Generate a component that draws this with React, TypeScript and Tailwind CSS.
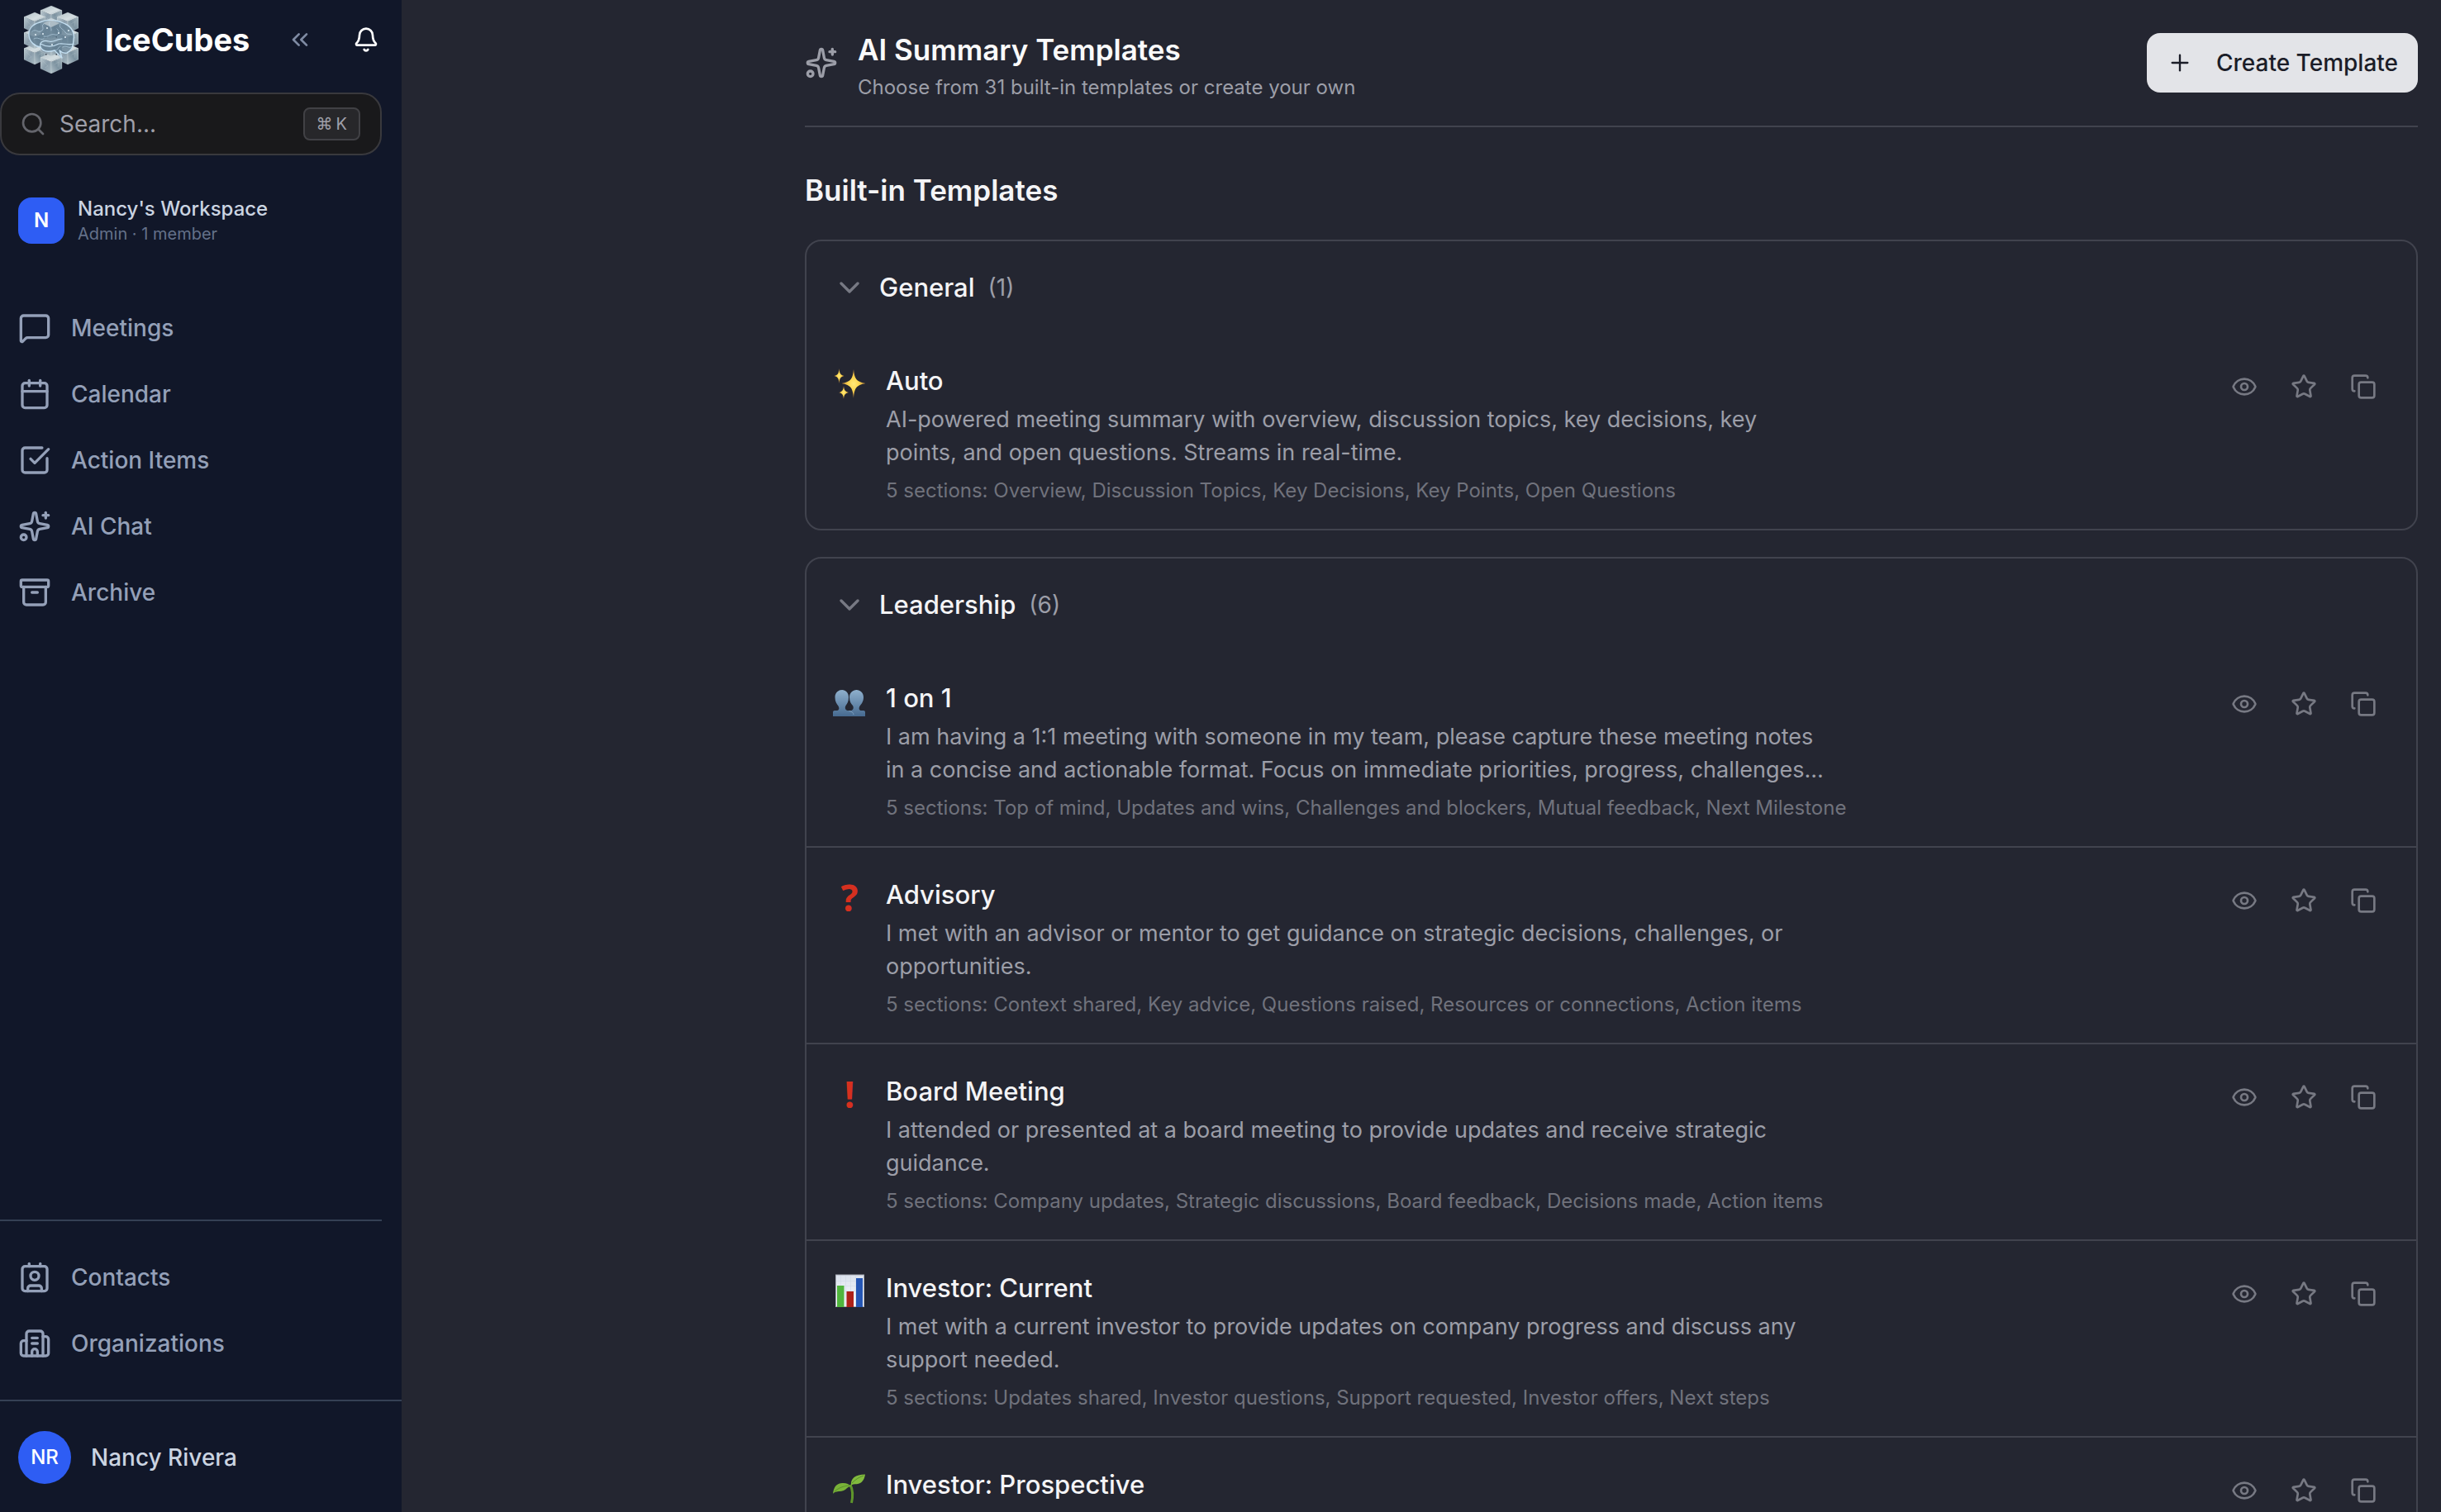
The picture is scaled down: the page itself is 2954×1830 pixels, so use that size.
import type { ReactNode } from "react";
import {
  Archive,
  Bell,
  Building2,
  Calendar,
  ChevronDown,
  ChevronsLeft,
  Contact,
  Copy,
  Eye,
  MessageSquare,
  Plus,
  Search,
  Sparkles,
  SquareCheckBig,
  Star,
  type LucideIcon,
} from "lucide-react";

type NavItem = { name: string; icon: LucideIcon };

type Template = {
  name: string;
  icon: ReactNode;
  description: string;
  sections: string;
};

type Group = { name: string; count: number; templates: Template[] };

const mainNav: NavItem[] = [
  { name: "Meetings", icon: MessageSquare },
  { name: "Calendar", icon: Calendar },
  { name: "Action Items", icon: SquareCheckBig },
  { name: "AI Chat", icon: Sparkles },
  { name: "Archive", icon: Archive },
];

const secondaryNav: NavItem[] = [
  { name: "Contacts", icon: Contact },
  { name: "Organizations", icon: Building2 },
];

function SparklesEmoji() {
  return (
    <svg viewBox="0 0 40 40" className="size-10" aria-hidden="true">
      <defs>
        <radialGradient id="spark">
          <stop offset="0" stopColor="#ffe97a" />
          <stop offset="0.45" stopColor="#fbd54f" />
          <stop offset="1" stopColor="#c98a3a" />
        </radialGradient>
      </defs>
      <g fill="url(#spark)">
        <path d="M25 3C26 14 28 18 39.500 20C28 22 26 26 25 38C24 26 22 22 10.500 20C22 18 24 14 25 3Z" />
        <path d="M7.500 2C8 8 9 10 13.500 11C9 12 8 14 7.500 20C7 14 6 12 1.500 11C6 10 7 8 7.500 2Z" />
        <path d="M13 23C13.500 28 14.500 30 19 31C14.500 32 13.500 34 13 39C12.500 34 11.500 32 7 31C11.500 30 12.500 28 13 23Z" />
      </g>
    </svg>
  );
}

function PeopleEmoji() {
  return (
    <svg viewBox="0 -4 40 40" className="size-10" aria-hidden="true">
      <defs>
        <linearGradient id="bust" x1="0" y1="0" x2="0" y2="1">
          <stop offset="0" stopColor="#8fb0cd" />
          <stop offset="1" stopColor="#466a90" />
        </linearGradient>
      </defs>
      <path
        fill="url(#bust)"
        d="M11 3C15.500 3 19 6.500 19 12C19 17 17 20 15.500 22C14 24.500 15 27.500 17.500 28H22C24.500 27.500 25.500 24.500 24 22C22 20 20 17 20 12C20 6.500 24 3 28.500 3C33 3 37 6.500 37 12C37 17 34.500 20 32.500 22.500C31 25 31.500 27.500 33.500 28H37C38.500 28 39 29 39 30V35H0V30C0 29 .5 28 2 28H5C7.500 27.500 8 25 6.500 22.500C4.500 20 2.500 17 2.500 12C2.500 6.500 6.500 3 11 3Z"
      />
      <path d="M19.500 28.500C23 29 25 31 25 33" fill="none" stroke="#7d9fc0" />
    </svg>
  );
}

function ChartEmoji() {
  return (
    <svg viewBox="0 0 40 40" className="size-10" aria-hidden="true">
      <defs>
        <linearGradient id="sheet" x1="0" y1="0" x2="0" y2="1">
          <stop offset="0" stopColor="#dce3ee" />
          <stop offset="1" stopColor="#f6f7fa" />
        </linearGradient>
      </defs>
      <rect x="3.500" y="1" width="34" height="38.500" fill="url(#sheet)" stroke="#a9adb8" />
      <path d="M9.500 2v37M15.500 2v37M21.500 2v37M27.500 2v37M4 8.500h33M4 14.500h33M4 20.500h33" stroke="#cdd6e4" strokeWidth=".5" />
      <rect x="5" y="14" width="8.500" height="26" fill="#50b53d" />
      <rect x="16.500" y="21" width="8.500" height="19" fill="#ad2118" />
      <rect x="28" y="5" width="8" height="35" fill="#2556b4" />
    </svg>
  );
}

function SeedlingEmoji() {
  return (
    <svg viewBox="0 0 40 40" className="size-10" aria-hidden="true">
      <path d="M21 17C24 23 24.500 30 22.500 39" fill="none" stroke="#5f962b" strokeWidth="3" />
      <path d="M0 28C1 19 5 15.500 11 15C16 14.500 19 16 22 19C18 19 17 22 13 24C8 26 3 24 0 28Z" fill="#79b238" />
      <path d="M22 18C21 9 27 5 39 4.500C38 11 35 15 30 16C26 16.500 24 16 22 18Z" fill="#82bb3e" />
      <path d="M2 25C7 21 12 18.500 20 18M23 15C27 11 31 8 37 6" fill="none" stroke="#4f8526" strokeWidth=".8" />
    </svg>
  );
}

function RedMark({ children }: { children: ReactNode }) {
  return (
    <span className="w-10 text-center font-['Open_Sans',sans-serif] text-[44px] leading-10 font-bold text-[#d6301f]">
      {children}
    </span>
  );
}

const groups: Group[] = [
  {
    name: "General",
    count: 1,
    templates: [
      {
        name: "Auto",
        icon: <SparklesEmoji />,
        description:
          "AI-powered meeting summary with overview, discussion topics, key decisions, key points, and open questions. Streams in real-time.",
        sections: "Overview, Discussion Topics, Key Decisions, Key Points, Open Questions",
      },
    ],
  },
  {
    name: "Leadership",
    count: 6,
    templates: [
      {
        name: "1 on 1",
        icon: <PeopleEmoji />,
        description:
          "I am having a 1:1 meeting with someone in my team, please capture these meeting notes in a concise and actionable format. Focus on immediate priorities, progress, challenges...",
        sections: "Top of mind, Updates and wins, Challenges and blockers, Mutual feedback, Next Milestone",
      },
      {
        name: "Advisory",
        icon: <RedMark>?</RedMark>,
        description:
          "I met with an advisor or mentor to get guidance on strategic decisions, challenges, or opportunities.",
        sections: "Context shared, Key advice, Questions raised, Resources or connections, Action items",
      },
      {
        name: "Board Meeting",
        icon: <RedMark>!</RedMark>,
        description:
          "I attended or presented at a board meeting to provide updates and receive strategic guidance.",
        sections: "Company updates, Strategic discussions, Board feedback, Decisions made, Action items",
      },
      {
        name: "Investor: Current",
        icon: <ChartEmoji />,
        description:
          "I met with a current investor to provide updates on company progress and discuss any support needed.",
        sections: "Updates shared, Investor questions, Support requested, Investor offers, Next steps",
      },
      {
        name: "Investor: Prospective",
        icon: <SeedlingEmoji />,
        description: "",
        sections: "",
      },
    ],
  },
];

// back to front, so nearer cubes cover the ones behind
const cubes = [
  [33, 0],
  [13, 46],
  [53, 46],
  [13, 27],
  [53, 27],
  [13, 8],
  [53, 8],
  [33, 57],
  [33, 36],
  [33, 15],
];

function Logo() {
  return (
    <svg viewBox="0 0 66 82" className="h-[82px] w-[66px]" role="img" aria-label="IceCubes logo">
      <defs>
        <linearGradient id="iceTop" x1="0" y1="0" x2="1" y2="1">
          <stop offset="0" stopColor="#b3c1c8" />
          <stop offset="0.6" stopColor="#d5dee1" />
          <stop offset="1" stopColor="#a5b6bf" />
        </linearGradient>
        <linearGradient id="iceLeft" x1="0" y1="0" x2="1" y2="1">
          <stop offset="0" stopColor="#bccad0" />
          <stop offset="0.5" stopColor="#8a9dab" />
          <stop offset="1" stopColor="#a9bac2" />
        </linearGradient>
        <linearGradient id="iceRight" x1="1" y1="0" x2="0" y2="1">
          <stop offset="0" stopColor="#a5b5bd" />
          <stop offset="0.5" stopColor="#7c92a0" />
          <stop offset="1" stopColor="#b3c2c9" />
        </linearGradient>
      </defs>
      {cubes.map(([x, y]) => (
        <g
          key={`${x}-${y}`}
          transform={`translate(${x} ${y})`}
          stroke="#dfe8ea"
          strokeOpacity=".45"
          strokeWidth=".5"
          strokeLinejoin="round"
        >
          <path d="M0 0L13 5.500L0 11L-13 5.500Z" fill="url(#iceTop)" />
          <path d="M-13 5.500L0 11V25L-13 19Z" fill="url(#iceLeft)" />
          <path d="M13 5.500L0 11V25L13 19Z" fill="url(#iceRight)" />
          <path d="M-10 10L-4 16L-8 18M4 14L9 11L8 17" fill="none" strokeOpacity=".3" />
        </g>
      ))}
      <path
        d="M6 36C5 27 12 22 19 20C29 15 43 18 50 22C57 25 62 33 60 41C60 47 58 54 52 57C48 58 45 56 43 54L46 63L41 58L37 54C30 56 23 56 20 50C13 49 7 44 6 36Z"
        fill="#5c788e"
        fillOpacity=".72"
        stroke="#c3def0"
        strokeWidth="1.400"
        strokeLinejoin="round"
      />
      <path d="M33 17L43 21L33 26L23 21Z" fill="#d5dee1" fillOpacity=".55" />
      <g fill="none" stroke="#c3def0" strokeLinecap="round">
        <path d="M20 50C18 44 24 41 30 43C36 45 39 40 46 40M20 46C27 50 35 50 42 46C49 45 54 48 60 46" strokeWidth="1.200" />
        <g strokeWidth=".7" strokeOpacity=".8">
          <path d="M10 31C15 27 17 34 22 30C25 26 20 24 24 22M24 37C30 39 31 33 38 35C42 36 44 31 40 28M44 22C41 27 48 28 50 32C52 36 56 33 58 35" />
          <path d="M12 40C17 37 19 42 24 40M31 20C29 25 34 26 33 30M47 50C51 47 54 52 57 50M37 54C42 54 41 50 44 49" />
        </g>
      </g>
      <g fill="#eefaff">
        <circle cx="14" cy="35" r=".9" />
        <circle cx="23" cy="34" r=".9" />
        <circle cx="28" cy="27" r=".9" />
        <circle cx="42" cy="33" r=".9" />
        <circle cx="50" cy="38" r=".9" />
        <circle cx="54" cy="30" r=".9" />
        <circle cx="34" cy="47" r=".9" />
      </g>
    </svg>
  );
}

function NavLinks({ items }: { items: NavItem[] }) {
  return (
    <ul>
      {items.map(({ name, icon: Icon }) => (
        <li key={name}>
          <a href="#" className="flex h-20 items-center gap-6 pl-[22px] text-[28px] font-medium text-[#94a0b8]">
            <Icon className="size-10" />
            {name}
          </a>
        </li>
      ))}
    </ul>
  );
}

function Sidebar() {
  return (
    <aside className="flex h-screen w-[486px] shrink-0 flex-col bg-[#111729]">
      <div className="flex h-24 items-center pl-[29px] pr-[27px]">
        <Logo />
        <span className="ml-8 text-[38px] font-bold text-white">IceCubes</span>
        <button type="button" aria-label="Collapse sidebar" className="ml-auto text-[#7f8ba3]">
          <ChevronsLeft className="size-8" />
        </button>
        <button type="button" aria-label="Notifications" className="ml-12 text-white">
          <Bell className="size-8" />
        </button>
      </div>

      <label className="mr-6 mt-4 flex h-[76px] items-center gap-4 rounded-3xl border-2 border-[#39393d] bg-[#19191b] pl-[22px] pr-6">
        <Search className="size-8 shrink-0 text-[#64656c]" />
        <input
          type="text"
          aria-label="Search"
          placeholder="Search..."
          className="min-w-0 flex-1 bg-transparent text-[28px] outline-none placeholder:text-[#9f9fa9]"
        />
        <kbd className="flex h-10 items-center gap-1 rounded-lg border-2 border-[#414145] bg-[#27272a] px-3.5 font-['Inter',sans-serif] text-xl text-[#9f9fa9]">
          <span className="font-['DejaVu_Sans',sans-serif]">⌘</span>
          <span>K</span>
        </kbd>
      </label>

      <button type="button" className="mt-[49px] flex items-center gap-4 pl-[22px] text-left">
        <span className="flex size-14 items-center justify-center rounded-2xl bg-[#2e5df4] text-2xl font-semibold text-white">
          N
        </span>
        <span>
          <span className="block text-2xl leading-8 font-medium text-[#cbd4e1]">Nancy's Workspace</span>
          <span className="block text-xl leading-7 text-[#64718a]">Admin · 1 member</span>
        </span>
      </button>

      <nav className="mt-[60px] flex flex-1 flex-col">
        <NavLinks items={mainNav} />
        <div className="mr-6 mt-auto border-t-2 border-[#354054] py-7">
          <NavLinks items={secondaryNav} />
        </div>
      </nav>

      <div className="border-t-2 border-[#354054] pb-[34px] pt-9">
        <button type="button" className="flex items-center gap-6 pl-[22px] text-[28px] font-medium text-[#cbd4e1]">
          <span className="flex size-16 items-center justify-center rounded-full bg-[#2e5df4] text-2xl text-white">
            NR
          </span>
          Nancy Rivera
        </button>
      </div>
    </aside>
  );
}

function TemplateRow({ template }: { template: Template }) {
  const { name, icon, description, sections } = template;
  return (
    <li className="flex min-h-[236px] items-start pb-7 pl-8 pr-7 pt-7">
      <div className="mt-3 flex size-10 shrink-0 items-center justify-center">{icon}</div>
      <div className="ml-6 mt-1 min-w-0 max-w-[1168px] flex-1">
        <h4 className="text-[31px] leading-[50px] font-medium text-[#f4f4f6]">{name}</h4>
        {description && (
          <p className="mt-0.5 line-clamp-2 max-w-[1140px] text-[27px] leading-10 text-[#9c9ea8]">
            {description}
          </p>
        )}
        {sections && <p className="mt-2 text-2xl leading-9 text-[#70727c]">5 sections: {sections}</p>}
      </div>
      <div className="ml-auto flex text-[#777983]">
        <button type="button" aria-label={`Preview ${name}`} className="p-5">
          <Eye className="size-8" />
        </button>
        <button type="button" aria-label={`Favorite ${name}`} className="p-5">
          <Star className="size-8" />
        </button>
        <button type="button" aria-label={`Duplicate ${name}`} className="p-5">
          <Copy className="size-8" />
        </button>
      </div>
    </li>
  );
}

function TemplateGroup({ group }: { group: Group }) {
  return (
    <section className="rounded-[20px] border-2 border-[#41434e]">
      <button type="button" aria-expanded="true" className="flex h-28 w-full items-center pl-8">
        <ChevronDown className="size-10 text-[#777983]" />
        <span className="ml-4 text-[31px] font-medium text-[#f4f4f6]">{group.name}</span>
        <span className="ml-4 text-[28px] text-[#9c9ea8]">({group.count})</span>
      </button>
      <ul className="divide-y-2 divide-[#41434e]">
        {group.templates.map((template) => (
          <TemplateRow key={template.name} template={template} />
        ))}
      </ul>
    </section>
  );
}

export default function App() {
  return (
    <div className="flex h-screen overflow-hidden bg-[#242631] font-['Inter',sans-serif]">
      <Sidebar />
      <main className="min-w-0 flex-1 overflow-hidden pl-[488px] pr-7">
        <header className="flex items-start border-b-2 border-[#41434e] pb-7 pt-10">
          <div className="flex h-[72px] items-center">
            <Sparkles className="size-10 text-[#9c9ea8]" />
          </div>
          <div className="ml-6">
            <h1 className="text-[35px] leading-10 font-semibold text-[#fafafa]">AI Summary Templates</h1>
            <p className="mt-2 text-2xl leading-9 text-[#9c9ea8]">
              Choose from 31 built-in templates or create your own
            </p>
          </div>
          <button
            type="button"
            className="ml-auto flex h-[72px] items-center gap-7 rounded-2xl bg-[#e3e4e8] px-6 text-[28px] font-medium text-[#1b1d28]"
          >
            <Plus className="size-8" strokeWidth={1.75} />
            Create Template
          </button>
        </header>

        <h2 className="mb-10 mt-14 text-[35px] leading-10 font-semibold text-[#f4f4f6]">Built-in Templates</h2>

        <div className="flex flex-col gap-8">
          {groups.map((group) => (
            <TemplateGroup key={group.name} group={group} />
          ))}
        </div>
      </main>
    </div>
  );
}
